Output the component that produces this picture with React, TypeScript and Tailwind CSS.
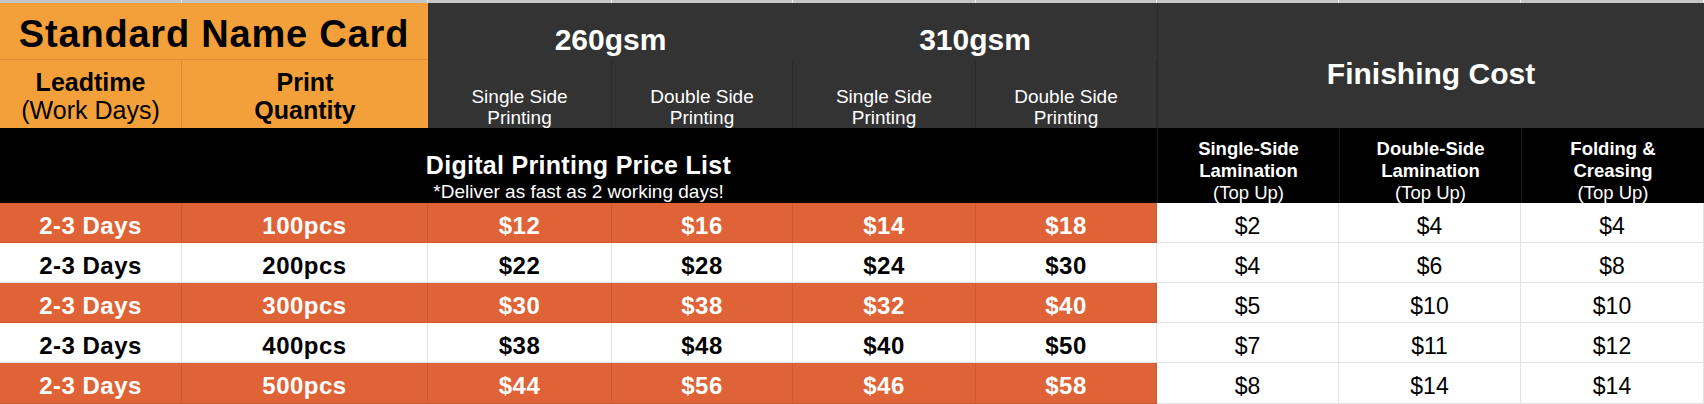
import React from 'react';

// Name card price table
const rows = [
  { qty: '100pcs', prices: ['$12', '$16', '$14', '$18'], fin: ['$2', '$4', '$4'] },
  { qty: '200pcs', prices: ['$22', '$28', '$24', '$30'], fin: ['$4', '$6', '$8'] },
  { qty: '300pcs', prices: ['$30', '$38', '$32', '$40'], fin: ['$5', '$10', '$10'] },
  { qty: '400pcs', prices: ['$38', '$48', '$40', '$50'], fin: ['$7', '$11', '$12'] },
  { qty: '500pcs', prices: ['$44', '$56', '$46', '$58'], fin: ['$8', '$14', '$14'] },
];

const printTypes = ['Single Side', 'Double Side', 'Single Side', 'Double Side'];

const finishing = [
  ['Single-Side', 'Lamination'],
  ['Double-Side', 'Lamination'],
  ['Folding &', 'Creasing'],
];

export default function App() {
  return (
    <div className="w-[1704px] h-[404px] bg-white overflow-hidden font-['Liberation_Sans',Arial,sans-serif]">
      <div className="grid grid-cols-[182px_246px_184px_181px_183px_181px_182px_182px_183px] grid-rows-[3px_57px_68px_75px_40px_40px_40px_40px_41px]">
        {/* strip of the sheet row above */}
        {Array.from({ length: 9 }).map((_, i) => (
          <div key={i} className="bg-[#c6c6c6] border-r border-[#f2f2f2]" />
        ))}

        {/* header row 1 */}
        <div className="col-span-2 bg-[#f4a03a] border-b border-[#dc8c32] flex justify-center pt-[9px]">
          <span className="text-[38px] leading-[44px] font-bold text-black tracking-[0.8px]">Standard Name Card</span>
        </div>
        <div className="col-span-2 bg-[#333333] flex justify-center pt-[20px]">
          <span className="text-[30px] leading-[34px] font-bold text-white">260gsm</span>
        </div>
        <div className="col-span-2 bg-[#333333] flex justify-center pt-[20px]">
          <span className="text-[30px] leading-[34px] font-bold text-white">310gsm</span>
        </div>
        <div className="col-span-3 row-span-2 bg-[#333333] border-l border-[#2a2a2a] flex justify-center pt-[54px]">
          <span className="text-[30px] leading-[34px] font-bold text-white">Finishing Cost</span>
        </div>

        {/* header row 2 */}
        <div className="bg-[#f4a03a] border-r border-[#dc8c32] flex flex-col items-center justify-center pt-[3px] text-[25px] leading-[28px] text-black">
          <span className="font-bold">Leadtime</span>
          <span>(Work Days)</span>
        </div>
        <div className="bg-[#f4a03a] flex flex-col items-center justify-center pt-[3px] text-[25px] leading-[28px] font-bold text-black">
          <span>Print</span>
          <span>Quantity</span>
        </div>
        {printTypes.map((p, i) => (
          <div
            key={i}
            className="bg-[#333333] border-r border-[#2c2c2c] flex flex-col items-center pt-[26px] text-[19px] leading-[21px] text-white overflow-hidden"
          >
            <span>{p}</span>
            <span>Printing</span>
          </div>
        ))}

        {/* black band */}
        <div className="col-span-6 bg-black flex flex-col items-center pt-[24px] text-white overflow-hidden">
          <span className="text-[25px] leading-[26px] font-bold tracking-[0.3px]">Digital Printing Price List</span>
          <span className="text-[19px] leading-[28px]">*Deliver as fast as 2 working days!</span>
        </div>
        {finishing.map((f, i) => (
          <div
            key={i}
            className="bg-black border-l border-[#1c1c1c] flex flex-col items-center pt-[10px] text-[18.5px] leading-[22px] text-white overflow-hidden"
          >
            <span className="font-bold">{f[0]}</span>
            <span className="font-bold">{f[1]}</span>
            <span>(Top Up)</span>
          </div>
        ))}

        {/* price rows */}
        {rows.map((r, i) => {
          const hl = i % 2 === 0;
          const cell = hl
            ? 'bg-[#e06337] border-r border-b border-[#cc5a31] text-white'
            : 'bg-white border-r border-b border-[#e2e2e2] text-black';
          const bold = 'flex justify-center pt-[9px] text-[24px] leading-[28px] font-bold tracking-[0.5px]';
          return (
            <React.Fragment key={r.qty}>
              <div className={`${cell} ${bold}`}>2-3 Days</div>
              <div className={`${cell} ${bold}`}>{r.qty}</div>
              {r.prices.map((p, j) => (
                <div key={j} className={`${cell} ${bold}`}>
                  {p}
                </div>
              ))}
              {r.fin.map((p, j) => (
                <div
                  key={j}
                  className="bg-white border-r border-b border-[#e2e2e2] flex justify-center pt-[9px] text-[23px] leading-[28px] text-black"
                >
                  {p}
                </div>
              ))}
            </React.Fragment>
          );
        })}
      </div>
    </div>
  );
}
